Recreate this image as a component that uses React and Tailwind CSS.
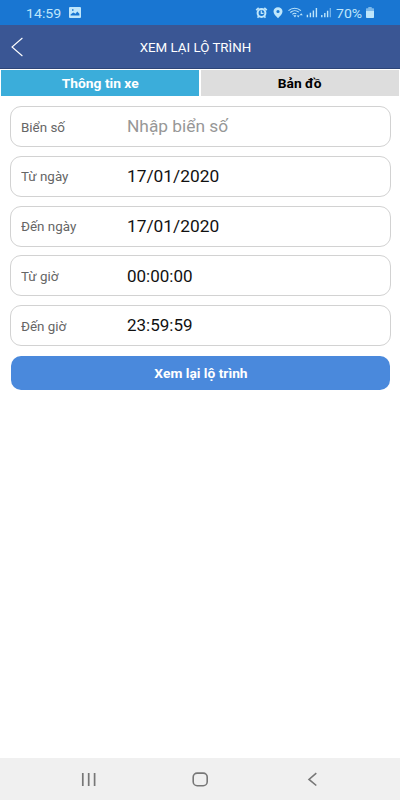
const fields = [
  { label: "Biển số", value: "Nhập biển số", placeholder: true },
  { label: "Từ ngày", value: "17/01/2020" },
  { label: "Đến ngày", value: "17/01/2020" },
  { label: "Từ giờ", value: "00:00:00", narrow: true },
  { label: "Đến giờ", value: "23:59:59", narrow: true },
];

function StatusBar() {
  return (
    <div className="flex h-[25px] items-center bg-[#1976d2] text-[#bfe6fb]">
      <span className="ml-[26px] w-[43px] pt-px text-[13px] leading-none">
        <span className="inline-block origin-left scale-x-[1.09]">14:59</span>
      </span>
      <svg className="h-[11px] w-3" viewBox="0 0 12 11" fill="currentColor">
        <path
          fillRule="evenodd"
          d="M1 0h10a1 1 0 0 1 1 1v9a1 1 0 0 1-1 1H1a1 1 0 0 1-1-1V1a1 1 0 0 1 1-1zM1.6 8.4h8.8V6.8L8.2 4.6 6.6 6.7 4.2 5.4 1.6 7.4zM3 2.3v1.4h1.5V2.3z"
        />
      </svg>
      <svg className="ml-[174px] h-4 w-[76px]" viewBox="255 5 76 16" fill="none" stroke="currentColor">
        <path strokeWidth="1.6" d="M256.2 10.2l2.5-2.3M266.8 10.2l-2.5-2.3M257.5 17.6l1.4-1.4M265.5 17.6l-1.4-1.4" />
        <circle cx="261.5" cy="13" r="3.9" strokeWidth="2" />
        <path strokeWidth="1.2" d="M261.3 10.5v2.8h2.2" />
        <path
          stroke="none"
          fill="currentColor"
          fillRule="evenodd"
          d="M278 7.3c-2.6 0-4.5 1.8-4.5 4.2 0 2.5 2.3 4.4 4.5 6.8 2.2-2.4 4.5-4.3 4.5-6.8 0-2.4-1.9-4.2-4.5-4.2zm0 2.6a1.6 1.6 0 1 1 0 3.2 1.6 1.6 0 0 1 0-3.2z"
        />
        <path strokeWidth="1.1" d="M288.5 10.6c3.6-3.2 8.8-3.2 12.4 0M290.3 12.5c2.6-2.3 6.2-2.3 8.6-.3M292.4 14.3c1.2-1.1 2.8-1.2 4-.4" />
        <path stroke="none" fill="currentColor" d="M293.2 15.2l1.8 2.2 1.4-2.2zM296.8 15.4l1.4 2 1.4-2zM299.6 15.2l1.6-2 1.6 2z" />
        <path strokeWidth="1.4" d="M307.4 17.3v-2.5M310.4 17.3v-4.5M313.4 17.3V10.5M316.4 17.3V8M321.8 17.3v-2.3M324.8 17.3v-4.3M327.6 17.3v-6.5" />
        <path strokeWidth="1.2" opacity=".6" d="M330.3 17.3V8" />
      </svg>
      <span className="ml-[5px] w-[30px] pt-px text-[13px] leading-none">
        <span className="inline-block origin-left scale-x-[1.08]">70%</span>
      </span>
      <svg className="h-[11px] w-2" viewBox="0 0 8 11" fill="currentColor">
        <path opacity=".6" d="M2.3 0h3.4v1.2H7.4q.6 0 .6.6V4H0V1.8q0-.6.6-.6h1.7z" />
        <path d="M0 4h8v6.2q0 .8-.8.8H.8Q0 11 0 10.2z" />
      </svg>
    </div>
  );
}

function Header() {
  return (
    <div className="grid h-11 grid-cols-[40px_1fr_40px] items-center border-b border-[#2c4478] bg-[#3a5694] text-white">
      <svg className="ml-[11px] h-5 w-3" viewBox="0 0 12 20" fill="none" stroke="currentColor" strokeWidth="1.1">
        <path d="M11.4 1L1 10l10.4 9" />
      </svg>
      <h1 className="-ml-[10px] pt-px text-center text-[13px] leading-none">
        <span className="inline-block scale-x-[1.025] whitespace-nowrap">XEM LẠI LỘ TRÌNH</span>
      </h1>
    </div>
  );
}

function Tabs() {
  return (
    <div className="grid h-7 grid-cols-2 gap-0.5 px-px pt-px pb-px text-[13px] leading-none font-bold">
      <button className="flex items-center justify-center bg-[#3badda] pt-px text-white">
        <span className="inline-block scale-x-[1.06]">Thông tin xe</span>
      </button>
      <button className="flex items-center justify-center bg-[#dddddd] pt-px text-black">
        <span className="inline-block scale-x-[1.06]">Bản đồ</span>
      </button>
    </div>
  );
}

function Field({ label, value, placeholder, narrow }) {
  return (
    <div className="flex h-[41px] items-center rounded-[11px] border border-[#d2d2d2] pl-[10px]">
      <span className="w-[106px] pt-px text-[13px] leading-none text-[#666]">
        <span className="inline-block origin-left scale-x-[1.03] whitespace-nowrap">{label}</span>
      </span>
      <span className={`pt-[2px] text-[16.5px] leading-none ${placeholder ? "text-[#979797]" : "text-[#111]"}`}>
        <span className={`inline-block origin-left whitespace-nowrap ${narrow ? "scale-x-[1.03]" : "scale-x-[1.05]"}`}>
          {value}
        </span>
      </span>
    </div>
  );
}

function NavBar() {
  return (
    <div className="flex h-[42px] bg-[#f0f0f0] pl-[81px] text-[#777]">
      <svg className="mt-[14px] h-4 w-4" viewBox="0 0 16 16" stroke="currentColor" strokeWidth="1.7">
        <path d="M1.8 1v13M7.7 1v13M13.6 1v13" />
      </svg>
      <svg className="mt-[14px] ml-[95px] h-4 w-4" viewBox="0 0 16 16" fill="none" stroke="currentColor" strokeWidth="1.6">
        <rect x="1.2" y="1.1" width="14" height="12.6" rx="4" />
      </svg>
      <svg className="mt-[14px] ml-[98px] h-4 w-4" viewBox="0 0 16 16" fill="none" stroke="currentColor" strokeWidth="1.6">
        <path d="M10.3 1.2L3 7.4l7.3 6.1" />
      </svg>
    </div>
  );
}

export default function App() {
  return (
    <div className="flex h-[800px] w-[400px] flex-col overflow-hidden bg-white font-['Roboto',sans-serif]">
      <StatusBar />
      <Header />
      <Tabs />
      <main className="flex flex-1 flex-col gap-[8.75px] px-[10px] pt-[9px] pr-[9px]">
        {fields.map((f) => (
          <Field key={f.label} {...f} />
        ))}
        <button className="mx-px mt-px flex h-[34px] items-center justify-center rounded-[10px] bg-[#4a89dc] pt-[2px] text-[13px] leading-none font-bold text-white">
          <span className="inline-block scale-x-[1.06]">Xem lại lộ trình</span>
        </button>
      </main>
      <NavBar />
    </div>
  );
}
